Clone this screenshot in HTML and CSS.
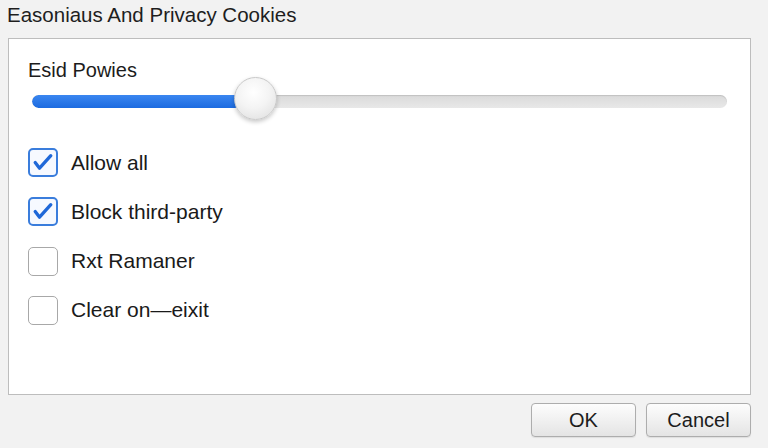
FILE: index.html
```html
<!DOCTYPE html>
<html>
<head>
<meta charset="utf-8">
<link rel="stylesheet" href="styles.css">
</head>
<body>
<div class="dialog">
  <div class="title">Easoniaus And Privacy Cookies</div>
  <div class="panel">
    <div class="slider-label">Esid Powies</div>
    <div class="slider">
      <div class="track">
        <div class="fill" style="width: 30%"></div>
      </div>
      <div class="thumb" style="left: 202px"></div>
    </div>
    <div class="options">
      <div class="option">
        <span class="box checked">
          <svg viewBox="0 0 30 30" width="30" height="30"><polyline points="6,14.5 11,21 24,6.5" fill="none" stroke="#1f68d8" stroke-width="3.8" stroke-linecap="round" stroke-linejoin="round"/></svg>
        </span>
        <span class="opt-text">Allow all</span>
      </div>
      <div class="option">
        <span class="box checked">
          <svg viewBox="0 0 30 30" width="30" height="30"><polyline points="6,14.5 11,21 24,6.5" fill="none" stroke="#1f68d8" stroke-width="3.8" stroke-linecap="round" stroke-linejoin="round"/></svg>
        </span>
        <span class="opt-text">Block third-party</span>
      </div>
      <div class="option">
        <span class="box"></span>
        <span class="opt-text">Rxt Ramaner</span>
      </div>
      <div class="option">
        <span class="box"></span>
        <span class="opt-text">Clear on&#8212;eixit</span>
      </div>
    </div>
  </div>
  <div class="footer">
    <button class="btn">OK</button>
    <button class="btn">Cancel</button>
  </div>
</div>
</body>
</html>
```

FILE: styles.css
```css
html, body {
  margin: 0;
  padding: 0;
  background: #f2f2f2;
  font-family: "Liberation Sans", Arial, sans-serif;
  color: #1c1c1c;
}

.dialog {
  width: 768px;
  height: 448px;
  box-sizing: border-box;
  padding: 0 17px 0 8px;
  display: flex;
  flex-direction: column;
}

.title {
  height: 38px;
  box-sizing: border-box;
  padding-top: 3px;
  font-size: 20.5px;
  line-height: 24px;
  color: #1e1e1e;
  margin-left: -1px;
}

.panel {
  height: 357px;
  box-sizing: border-box;
  background: #ffffff;
  border: 1px solid #bdbdbd;
  padding: 19px 23px 0 19px;
  display: flex;
  flex-direction: column;
}

.slider-label {
  font-size: 20px;
  line-height: 24px;
  color: #1c1c1c;
}

.slider {
  position: relative;
  height: 44px;
  margin: -4px 0 0 4px;
  display: flex;
  align-items: center;
}

.track {
  flex: 1;
  height: 13px;
  margin-top: 3px;
  border-radius: 7px;
  background: linear-gradient(#dadada, #e8e8e8);
  box-shadow: inset 0 1px 1px rgba(0,0,0,0.12);
  overflow: hidden;
}

.fill {
  height: 100%;
  border-radius: 7px;
  background: linear-gradient(#3a86f0, #1c6be0);
}

.thumb {
  position: absolute;
  top: -1px;
  width: 43px;
  height: 43px;
  box-sizing: border-box;
  border-radius: 50%;
  border: 1px solid #c9c9c9;
  background: radial-gradient(circle at 45% 35%, #ffffff 0%, #f4f4f4 45%, #dcdcdc 100%);
  box-shadow: 0 2px 4px rgba(0,0,0,0.22);
}

.options {
  margin-top: 26px;
  display: flex;
  flex-direction: column;
  gap: 20.3px;
}

.option {
  height: 29px;
  display: flex;
  align-items: center;
  gap: 13px;
}

.box {
  width: 30px;
  height: 29px;
  box-sizing: border-box;
  border: 1.5px solid #a8a8a8;
  border-radius: 5px;
  background: #fff;
  display: flex;
  align-items: center;
  justify-content: center;
  flex: none;
}

.box svg {
  display: block;
}

.box.checked {
  border: 2px solid #3a7ddc;
  background: #f6f9ff;
}

.opt-text {
  font-size: 21px;
  line-height: 26px;
  color: #1a1a1a;
}

.footer {
  margin-top: 8px;
  display: flex;
  justify-content: flex-end;
  gap: 10px;
}

.btn {
  width: 105px;
  height: 34px;
  box-sizing: border-box;
  border: 1px solid #adadad;
  border-radius: 4px;
  background: linear-gradient(#fdfdfd, #e4e4e4);
  box-shadow: 0 1px 1px rgba(0,0,0,0.08);
  font-family: "Liberation Sans", Arial, sans-serif;
  font-size: 20px;
  color: #1c1c1c;
  padding: 0;
}
```
